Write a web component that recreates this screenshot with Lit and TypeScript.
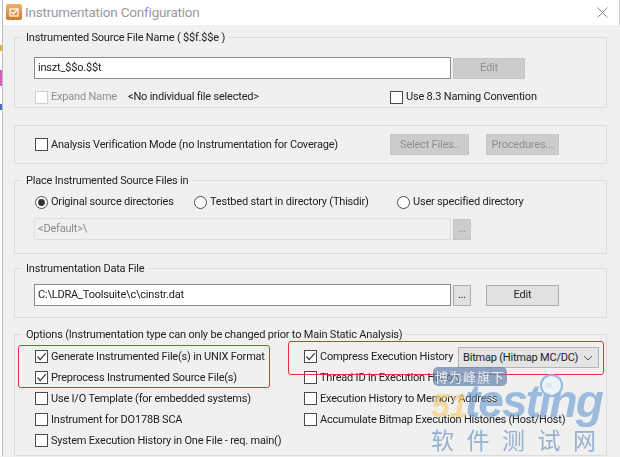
import { LitElement, html, css, svg } from "lit";
import { customElement } from "lit/decorators.js";

const checkbox = (checked = false, disabled = false) => html`<svg class="box" width="13" height="13" viewBox="0 0 13 13">
  <rect x=".5" y=".5" width="12" height="12" fill="#fff" stroke=${disabled ? "#cfcfcf" : "#4b4b4b"}></rect>
  ${checked ? svg`<path d="M2.5 6.5 5.2 9.6 10.8 3.2" fill="none" stroke="#333" stroke-width="1.2"></path>` : ""}
</svg>`;

const radio = (checked = false) => html`<svg class="box" width="13" height="13" viewBox="0 0 13 13">
  <circle cx="6.5" cy="6.5" r="6" fill="#fff" stroke="#4b4b4b"></circle>
  ${checked ? svg`<circle cx="6.5" cy="6.5" r="3.4" fill="#333"></circle>` : ""}
</svg>`;

@customElement("app-root")
export class AppRoot extends LitElement {
  static styles = css`
    :host { display: block; width: 620px; height: 457px; overflow: hidden; position: relative; background: #f0f0f0;
      font: 11px/14px Roboto, "Liberation Sans", Arial, sans-serif; letter-spacing: -0.2px; color: #222; }
    .sidebar { position: absolute; left: 0; top: 0; bottom: 0; width: 2px; background: #fff; border-right: 1px solid #bdbdbd; }
    .sidebar i { position: absolute; left: 0; width: 2px; }
    .window { filter: blur(0.35px); }
    .titlebar { height: 24px; padding-bottom: 1px; background: #fff; border-right: 1px solid #ccc; display: flex; align-items: center; padding-left: 6px; gap: 3px; color: #9a9a9a; font-size: 13.5px; }
    .titlebar .title { flex: 1; }
    .close { margin-right: 11px; }
    .body { padding: 5px 13px 0 14px; display: flex; flex-direction: column; }
    fieldset { box-sizing: border-box; margin: 0; padding: 0 0 0 19px; border: 1px solid #dcdcdc; min-width: 0; }
    legend { margin-left: -12px; padding: 2px 4px 0; line-height: 12px; }
    .row { display: flex; align-items: center; }
    .pad { padding-left: 1px; }
    .item { display: flex; align-items: center; gap: 3px; white-space: nowrap; }
    .box { flex: none; }
    .muted { color: #8f8f8f; }
    .input { width: 417px; height: 22px; box-sizing: border-box; background: #fff; border: 1px solid #8a8a8a; padding-left: 3px; display: flex; align-items: center; }
    .input.off { background: #f0f0f0; border-color: #dedede; color: #8a8a8a; }
    .btn { height: 21px; box-sizing: border-box; background: #e1e1e1; border: 1px solid #adadad; display: flex; align-items: center; justify-content: center; }
    .btn.off { background: #cccccc; border-color: #c6c6c6; color: #8e8e8e; }
    .g1 { height: 78px; }
    .g1 .top { margin-top: 13px; }
    .g1 .bottom { margin-top: 12px; height: 12px; }
    .g2 { height: 39px; margin-top: 17px; }
    .g2-in { height: 37px; }
    .g3 { height: 81px; margin-top: 9px; }
    .g3 .radios { margin-top: 8px; height: 14px; }
    .g3 .top { margin-top: 9px; }
    .g4 { height: 57px; margin-top: 7px; }
    .g4 .top { margin-top: 9px; }
    .g5 { height: 129px; margin-top: 9px; }
    .opts { display: grid; grid-template-columns: 269px 1fr; grid-auto-rows: 21px; margin-top: 5px; align-items: center; }
    .select { position: absolute; left: 458px; top: 347px; width: 141px; height: 21px; box-sizing: border-box; background: #e4e4e4; border: 1px solid #b4b4b4; display: flex; align-items: center; justify-content: space-between; padding: 0 5px 0 4px; white-space: nowrap; }
    .mark { position: absolute; border: 1.5px solid #f03030; border-radius: 3px; box-sizing: border-box; }
    .mark.a { left: 18px; top: 345px; width: 252px; height: 43px; }
    .mark.b { left: 288px; top: 341px; width: 316px; height: 34px; }
    .wm { position: absolute; left: 0; top: 0; right: 0; bottom: 0; pointer-events: none; filter: blur(0.5px); }
    .wm div { position: absolute; white-space: nowrap; }
    .tag { left: 433px; top: 367px; width: 74px; height: 19px; border-radius: 5px; background: rgba(102,132,170,.72); color: #e6edf5; font: 13px/19px "Noto Sans CJK SC", sans-serif; text-align: center; letter-spacing: 1px; }
    .fiveone { left: 431px; top: 380px; font: italic 700 34px/50px "Liberation Sans", sans-serif; color: rgba(245,205,120,.7); letter-spacing: -1px; }
    .testing { left: 465px; top: 376px; font: italic 700 46px/50px "Liberation Sans", sans-serif; color: rgba(100,150,205,.6); letter-spacing: -2px; }
    .cn { left: 431px; top: 425px; font: 23px/28px "Noto Sans CJK SC", sans-serif; color: rgba(110,150,195,.7); letter-spacing: 12.5px; }
    .lens { left: 540px; top: 374px; width: 19px; height: 19px; border-radius: 50%; border: 2px solid rgba(120,165,210,.75); background: rgba(238,244,250,.8); }
  `;

  render() {
    return html`
      <div class="window">
        <div class="sidebar">
          <i style="top:45px;height:6px;background:#d8b23a"></i>
          <i style="top:70px;height:16px;background:#d060c0"></i>
          <i style="top:104px;height:6px;background:#4070c0"></i>
        </div>
        <div class="titlebar">
          <svg width="16" height="16" viewBox="0 0 16 16">
            <defs><linearGradient id="o" x1="0" y1="0" x2="0" y2="1"><stop offset="0" stop-color="#eeb270"></stop><stop offset="1" stop-color="#d27a25"></stop></linearGradient></defs>
            <rect width="16" height="16" rx="2" fill="url(#o)"></rect>
            <rect x="4" y="5" width="8" height="7" fill="none" stroke="#fff" stroke-width="1.2"></rect>
            <path d="M5.5 8 7.5 10 12 4.5" fill="none" stroke="#fff" stroke-width="1.3"></path>
          </svg>
          <span class="title">Instrumentation Configuration</span>
          <svg class="close" width="11" height="11" viewBox="0 0 11 11"><path d="M.5.5 10.5 10.5M10.5.5.5 10.5" stroke="#8c8c8c" fill="none"></path></svg>
        </div>
        <div class="body">
          <fieldset class="g1">
            <legend>Instrumented Source File Name ( $$f.$$e )</legend>
            <div class="row top">
              <div class="input">inszt_$$o.$$t</div>
              <div class="btn off" style="width:72px;margin-left:2px">Edit</div>
            </div>
            <div class="row bottom pad">
              <div class="item muted" style="width:93px">${checkbox(false, true)}Expand Name</div>
              <div style="width:262px">&lt;No individual file selected&gt;</div>
              <div class="item">${checkbox()}Use 8.3 Naming Convention</div>
            </div>
          </fieldset>
          <fieldset class="g2">
            <div class="row g2-in pad">
              <div class="item" style="width:355px">${checkbox()}Analysis Verification Mode (no Instrumentation for Coverage)</div>
              <div class="btn off" style="width:79px">Select Files..</div>
              <div class="btn off" style="width:73px;margin-left:17px">Procedures...</div>
            </div>
          </fieldset>
          <fieldset class="g3">
            <legend>Place Instrumented Source Files in</legend>
            <div class="row radios pad">
              <div class="item" style="width:159px">${radio(true)}Original source directories</div>
              <div class="item" style="width:203px">${radio()}Testbed start in directory (Thisdir)</div>
              <div class="item">${radio()}User specified directory</div>
            </div>
            <div class="row top">
              <div class="input off">&lt;Default&gt;\\</div>
              <div class="btn off" style="width:18px;margin-left:2px">...</div>
            </div>
          </fieldset>
          <fieldset class="g4">
            <legend>Instrumentation Data File</legend>
            <div class="row top">
              <div class="input">C:\\LDRA_Toolsuite\\c\\cinstr.dat</div>
              <div class="btn" style="width:18px;margin-left:2px">...</div>
              <div class="btn" style="width:73px;margin-left:15px">Edit</div>
            </div>
          </fieldset>
          <fieldset class="g5">
            <legend>Options (Instrumentation type can only be changed prior to Main Static Analysis)</legend>
            <div class="opts pad">
              <div class="item">${checkbox(true)}Generate Instrumented File(s) in UNIX Format</div>
              <div class="item">${checkbox(true)}Compress Execution History</div>
              <div class="item">${checkbox(true)}Preprocess Instrumented Source File(s)</div>
              <div class="item">${checkbox()}Thread ID in Execution History</div>
              <div class="item">${checkbox()}Use I/O Template (for embedded systems)</div>
              <div class="item">${checkbox()}Execution History to Memory Address</div>
              <div class="item">${checkbox()}Instrument for DO178B SCA</div>
              <div class="item">${checkbox()}Accumulate Bitmap Execution Histories (Host/Host)</div>
              <div class="item">${checkbox()}System Execution History in One File - req. main()</div>
            </div>
          </fieldset>
        </div>
        <div class="select">
          <span>Bitmap (Hitmap MC/DC)</span>
          <svg width="10" height="6" viewBox="0 0 10 6"><path d="M1 1 5 5 9 1" fill="none" stroke="#555"></path></svg>
        </div>
        <div class="mark a"></div>
        <div class="mark b"></div>
      </div>
      <div class="wm">
        <div class="fiveone">51</div>
        <div class="testing">testing</div>
        <div class="lens"></div>
        <div class="tag">博为峰旗下</div>
        <div class="cn">软件测试网</div>
      </div>
    `;
  }
}
